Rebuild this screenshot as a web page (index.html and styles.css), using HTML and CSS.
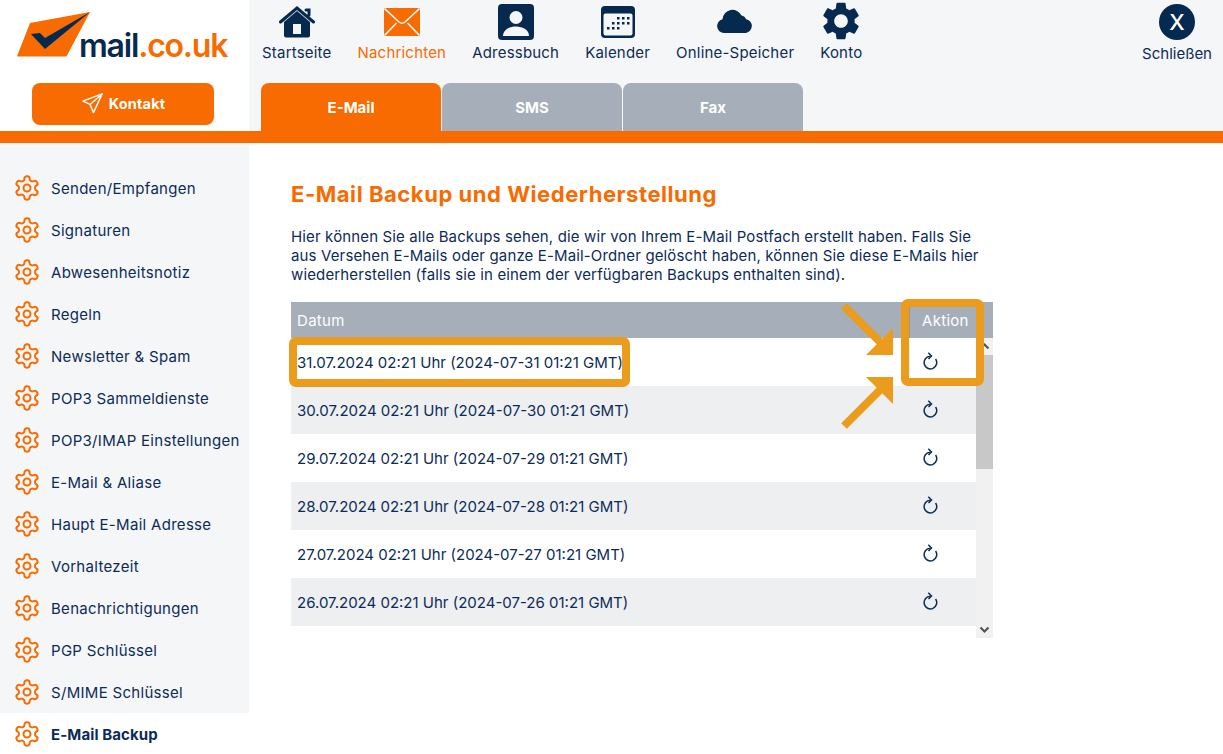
FILE: index.html
```html
<!DOCTYPE html>
<html lang="de">
<head>
<meta charset="utf-8">
<title>E-Mail Backup</title>
<link rel="stylesheet" href="styles.css">
</head>
<body>
<svg class="defs" width="0" height="0" aria-hidden="true">
  <symbol id="cog" viewBox="0 0 24 24"><path d="M12.22 2h-.44a2 2 0 0 0-2 2v.18a2 2 0 0 1-1 1.73l-.43.25a2 2 0 0 1-2 0l-.15-.08a2 2 0 0 0-2.73.73l-.22.38a2 2 0 0 0 .73 2.73l.15.1a2 2 0 0 1 1 1.72v.51a2 2 0 0 1-1 1.74l-.15.09a2 2 0 0 0-.73 2.73l.22.38a2 2 0 0 0 2.73.73l.15-.08a2 2 0 0 1 2 0l.43.25a2 2 0 0 1 1 1.73V20a2 2 0 0 0 2 2h.44a2 2 0 0 0 2-2v-.18a2 2 0 0 1 1-1.73l.43-.25a2 2 0 0 1 2 0l.15.08a2 2 0 0 0 2.73-.73l.22-.39a2 2 0 0 0-.73-2.73l-.15-.08a2 2 0 0 1-1-1.74v-.5a2 2 0 0 1 1-1.74l.15-.09a2 2 0 0 0 .73-2.73l-.22-.38a2 2 0 0 0-2.73-.73l-.15.08a2 2 0 0 1-2 0l-.43-.25a2 2 0 0 1-1-1.73V4a2 2 0 0 0-2-2z"/><circle cx="12" cy="12" r="3"/></symbol>
  <symbol id="redo" viewBox="0 0 16 18"><path d="M8.200 4.300A6.300 6.300 0 1 0 13.600 7"/><path d="M6.300 .8 9.500 4 6.500 7"/></symbol>
</svg>

<header class="top">
  <div class="brand">
    <div class="logo">
      <svg class="logo-mark" viewBox="0 0 76 48" width="76" height="48" aria-hidden="true">
        <path class="logo-env" d="M14 12 74 1 51 44.500Q50.500 45.500 49 45.500H2Q0.500 45.500 1.500 44Z"/>
        <path class="logo-check" d="M15 23 29 38 74 1 29 27 24 22Z"/>
      </svg>
      <span class="logo-text"><span class="logo-dark">mail</span>.co.uk</span>
    </div>
    <a class="contact">
      <svg viewBox="0 0 24 24" width="23" height="23" aria-hidden="true"><path d="M22 2 2 9.500l7.500 3.500L13 21.500Z"/><path d="M22 2 9.500 13"/></svg>
      Kontakt
    </a>
  </div>
  <div class="nav-area">
    <nav class="nav">
      <a class="nav-item">
        <svg viewBox="0 0 36 32" width="36" height="32" class="ico-home" aria-hidden="true"><path class="fill" d="M18 5 5 16v13.500a2 2 0 0 0 2 2h22a2 2 0 0 0 2-2V16Z"/><path class="hole" d="M14 18h8v10h-8z"/><path class="roof" d="M1.500 16 18 2l16.500 14M27 4h3v5"/></svg>
        <span>Startseite</span>
      </a>
      <a class="nav-item active">
        <svg viewBox="0 0 36 28" width="36" height="28" class="ico-mail" aria-hidden="true"><rect width="36" height="28"/><path d="M0.500 0.500 15 14q3 2.500 6 0L35.500 0.500M0.500 27.500 12.500 15M35.500 27.500 23.500 15"/></svg>
        <span>Nachrichten</span>
      </a>
      <a class="nav-item">
        <svg viewBox="0 0 36 36" width="36" height="36" class="ico-book" aria-hidden="true"><rect class="fill" width="36" height="36" rx="4"/><circle class="hole" cx="18" cy="13.500" r="6.500"/><path class="hole" d="M5 32c0-6 6-9.500 13-9.500S31 26 31 32Z"/></svg>
        <span>Adressbuch</span>
      </a>
      <a class="nav-item">
        <svg viewBox="0 0 34 32" width="34" height="32" class="ico-cal" aria-hidden="true"><rect class="fill" width="34" height="32" rx="4"/><rect class="hole" x="2.500" y="7.500" width="29" height="22" rx="2"/><g class="fill"><rect x="16" y="11" width="2.500" height="2.500"/><rect x="21" y="11" width="2.500" height="2.500"/><rect x="26" y="11" width="2.500" height="2.500"/><rect x="11" y="16" width="2.500" height="2.500"/><rect x="16" y="16" width="2.500" height="2.500"/><rect x="21" y="16" width="2.500" height="2.500"/><rect x="26" y="16" width="2.500" height="2.500"/><rect x="6" y="21" width="2.500" height="2.500"/><rect x="11" y="21" width="2.500" height="2.500"/><rect x="16" y="21" width="2.500" height="2.500"/></g></svg>
        <span>Kalender</span>
      </a>
      <a class="nav-item">
        <svg viewBox="0 0 36 24" width="36" height="24" class="ico-cloud" aria-hidden="true"><path class="fill" d="M7 24a7 7 0 0 1-1.500-13.800A10 10 0 0 1 24.500 6.500 5.500 5.500 0 0 1 29 10.200 7 7 0 0 1 29 24Z"/></svg>
        <span>Online-Speicher</span>
      </a>
      <a class="nav-item">
        <svg viewBox="2.500 2 19 20" width="36" height="38" class="ico-gear" aria-hidden="true"><path class="fill" d="M19.140 12.940c.04-.3.06-.61.06-.94 0-.32-.02-.64-.07-.94l2.030-1.580a.49.49 0 0 0 .12-.61l-1.920-3.320a.488.488 0 0 0-.59-.22l-2.390.96c-.5-.38-1.030-.7-1.620-.94l-.36-2.540a.484.484 0 0 0-.48-.41h-3.840c-.24 0-.43.17-.47.41l-.36 2.540c-.59.24-1.130.57-1.620.94l-2.390-.96c-.22-.08-.47 0-.59.22L2.740 8.870c-.12.21-.08.47.12.61l2.030 1.580c-.05.3-.09.63-.09.94s.02.64.07.94l-2.030 1.580a.49.49 0 0 0-.12.61l1.920 3.320c.12.22.37.29.59.22l2.390-.96c.5.38 1.030.7 1.620.94l.36 2.540c.05.24.24.41.48.41h3.840c.24 0 .44-.17.47-.41l.36-2.540c.59-.24 1.130-.56 1.620-.94l2.390.96c.22.08.47 0 .59-.22l1.920-3.320c.12-.22.07-.47-.12-.61l-2.010-1.580zM12 15.600c-1.980 0-3.600-1.620-3.600-3.600s1.620-3.600 3.600-3.600 3.600 1.620 3.600 3.600-1.620 3.600-3.600 3.600z"/></svg>
        <span>Konto</span>
      </a>
      <a class="nav-item close">
        <span class="close-x">X</span>
        <span>Schließen</span>
      </a>
    </nav>
    <div class="tabs">
      <a class="tab tab-on">E-Mail</a>
      <a class="tab">SMS</a>
      <a class="tab">Fax</a>
    </div>
  </div>
</header>
<div class="bar"></div>

<div class="content">
  <aside class="side">
    <a class="side-item"><svg class="cog"><use href="#cog"/></svg>Senden/Empfangen</a>
    <a class="side-item"><svg class="cog"><use href="#cog"/></svg>Signaturen</a>
    <a class="side-item"><svg class="cog"><use href="#cog"/></svg>Abwesenheitsnotiz</a>
    <a class="side-item"><svg class="cog"><use href="#cog"/></svg>Regeln</a>
    <a class="side-item"><svg class="cog"><use href="#cog"/></svg>Newsletter &amp; Spam</a>
    <a class="side-item"><svg class="cog"><use href="#cog"/></svg>POP3 Sammeldienste</a>
    <a class="side-item"><svg class="cog"><use href="#cog"/></svg>POP3/IMAP Einstellungen</a>
    <a class="side-item"><svg class="cog"><use href="#cog"/></svg>E-Mail &amp; Aliase</a>
    <a class="side-item"><svg class="cog"><use href="#cog"/></svg>Haupt E-Mail Adresse</a>
    <a class="side-item"><svg class="cog"><use href="#cog"/></svg>Vorhaltezeit</a>
    <a class="side-item"><svg class="cog"><use href="#cog"/></svg>Benachrichtigungen</a>
    <a class="side-item"><svg class="cog"><use href="#cog"/></svg>PGP Schlüssel</a>
    <a class="side-item"><svg class="cog"><use href="#cog"/></svg>S/MIME Schlüssel</a>
    <a class="side-item side-on"><svg class="cog"><use href="#cog"/></svg>E-Mail Backup</a>
  </aside>
  <main class="main">
    <h1 class="title">E-Mail Backup und Wiederherstellung</h1>
    <p class="intro">Hier können Sie alle Backups sehen, die wir von Ihrem E-Mail Postfach erstellt haben. Falls Sie aus Versehen E-Mails oder ganze E-Mail-Ordner gelöscht haben, können Sie diese E-Mails hier wiederherstellen (falls sie in einem der verfügbaren Backups enthalten sind).</p>
    <div class="table">
      <div class="thead"><span class="col-date">Datum</span><span class="col-act">Aktion</span></div>
      <div class="tbody">
        <div class="rows">
          <div class="row"><span class="col-date">31.07.2024 02:21 Uhr (2024-07-31 01:21 GMT)</span><span class="col-act"><svg class="redo"><use href="#redo"/></svg></span></div>
          <div class="row"><span class="col-date">30.07.2024 02:21 Uhr (2024-07-30 01:21 GMT)</span><span class="col-act"><svg class="redo"><use href="#redo"/></svg></span></div>
          <div class="row"><span class="col-date">29.07.2024 02:21 Uhr (2024-07-29 01:21 GMT)</span><span class="col-act"><svg class="redo"><use href="#redo"/></svg></span></div>
          <div class="row"><span class="col-date">28.07.2024 02:21 Uhr (2024-07-28 01:21 GMT)</span><span class="col-act"><svg class="redo"><use href="#redo"/></svg></span></div>
          <div class="row"><span class="col-date">27.07.2024 02:21 Uhr (2024-07-27 01:21 GMT)</span><span class="col-act"><svg class="redo"><use href="#redo"/></svg></span></div>
          <div class="row"><span class="col-date">26.07.2024 02:21 Uhr (2024-07-26 01:21 GMT)</span><span class="col-act"><svg class="redo"><use href="#redo"/></svg></span></div>
        </div>
        <div class="scroll">
          <svg class="scroll-btn" viewBox="0 0 17 17" aria-hidden="true"><path d="M4.500 10.500 8.500 6.500l4 4"/></svg>
          <div class="thumb"></div>
          <svg class="scroll-btn scroll-down" viewBox="0 0 17 17" aria-hidden="true"><path d="M4.500 6.500 8.500 10.500l4-4"/></svg>
        </div>
      </div>
    </div>
  </main>
</div>

<div class="mark mark-date"></div>
<div class="mark mark-act"></div>
<svg class="arrows" viewBox="0 0 60 130" width="60" height="130" aria-hidden="true">
  <path d="M5 7 46 48M5 127 46 86"/>
  <polygon points="54,29 54,56 27,56"/>
  <polygon points="54,78 54,105 27,78"/>
</svg>
</body>
</html>
```
FILE: styles.css
```css
* { box-sizing: border-box; }
html, body { margin: 0; height: 754px; overflow: hidden; }
body { position: relative; font-family: Inter, "Noto Sans", sans-serif; font-size: 15px; color: #0b2c57; background: #fff; }
.defs { position: absolute; }
a { color: inherit; text-decoration: none; }

.top { display: flex; height: 131px; }
.brand { width: 249px; flex: none; background: #fff; display: flex; flex-direction: column; }
.logo { height: 83px; width: 100%; display: flex; align-items: flex-start; padding: 11px 0 0 16px; position: relative; }
.logo-env { fill: #f76b00; }
.logo-check { fill: #06294f; }
.logo-text { position: absolute; left: 79px; top: 24px; font-size: 32px; line-height: 44px; font-weight: 600; letter-spacing: -1.200px; color: #f76b00; }
.logo-dark { color: #06294f; }
.contact { width: 182px; height: 42px; margin-left: 32px; padding-bottom: 2px; border-radius: 8px; background: #f76b00; color: #fff; font-weight: 700; font-size: 14.500px; letter-spacing: .2px; display: flex; align-items: center; justify-content: center; gap: 5px; }
.contact svg { fill: none; stroke: #fff; stroke-width: 1.500; stroke-linejoin: round; stroke-linecap: round; }

.nav-area { flex: 1; background: #f5f6f8; display: flex; flex-direction: column; }
.nav { height: 83px; display: flex; gap: 26px; padding: 0 11px 0 13px; letter-spacing: .2px; }
.nav-item { display: flex; flex-direction: column; align-items: center; justify-content: flex-end; height: 62px; line-height: 18px; white-space: nowrap; }
.nav-item svg { margin-bottom: 6px; }
.nav-item .ico-mail { margin-bottom: 8px; }
.nav-item .ico-book { margin-bottom: 4px; }
.nav-item .ico-gear { margin-bottom: 4px; }
.nav-item .ico-cloud { margin-bottom: 11px; }
.active { color: #f76b00; }
.fill { fill: #06294f; }
.hole { fill: #f5f6f8; }
.roof { fill: none; stroke: #06294f; stroke-width: 3; stroke-linecap: round; }
.ico-mail rect { fill: #f76b00; }
.ico-mail path { fill: none; stroke: #f5f6f8; stroke-width: 1.600; }
.close { margin-left: auto; height: 63px; letter-spacing: 0; }
.close-x { width: 36px; height: 36px; border-radius: 50%; background: #06294f; color: #fff; font-size: 22px; font-weight: 500; line-height: 36px; text-align: center; margin-bottom: 5px; }

.tabs { display: flex; gap: 1px; padding-left: 12px; height: 48px; }
.tab { width: 180px; height: 48px; border-radius: 8px 8px 0 0; background: #a5aeb9; color: #fff; font-weight: 700; font-size: 15px; line-height: 50px; text-align: center; }
.tab-on { background: #f76b00; }
.bar { height: 12px; background: #f76b00; }

.content { display: flex; height: 611px; }
.side { width: 249px; flex: none; background: #f5f6f8; padding-top: 24px; }
.side-item { display: flex; align-items: center; gap: 10px; height: 42px; padding-left: 13px; white-space: nowrap; letter-spacing: .3px; }
.side-on { background: #fff; font-weight: 700; letter-spacing: .1px; }
.cog { width: 28px; height: 28px; fill: none; stroke: #f76b00; stroke-width: 1.700; }

.main { padding: 36px 0 0 42px; width: 744px; }
.title { margin: 0 0 18px; font-size: 22px; line-height: 30px; font-weight: 700; letter-spacing: .55px; color: #f76b00; }
.intro { margin: 0 0 18px; line-height: 19px; width: 700px; letter-spacing: .14px; }

.table { width: 702px; }
.thead { display: flex; height: 36px; background: #a5aeb9; color: #fff; align-items: stretch; line-height: 37px; letter-spacing: .3px; }
.col-date { flex: 1; padding-left: 6px; }
.col-act { width: 67px; padding-left: 12px; flex: none; }
.thead .col-act { width: 84px; border-left: 1px solid #8f99a5; }
.tbody { display: flex; height: 300px; }
.rows { flex: 1; }
.row { display: flex; height: 48px; align-items: center; background: #fff; }
.row:nth-child(even) { background: #eeeff1; }
.redo { width: 16px; height: 18px; fill: none; stroke: #0b2c57; stroke-width: 1.500; display: block; margin: -3px 0 0 1px; }
.scroll { width: 17px; flex: none; background: #f1f1f1; display: flex; flex-direction: column; }
.scroll-btn { width: 17px; height: 17px; display: block; fill: none; stroke: #505050; stroke-width: 2; }
.scroll-down { margin-top: auto; }
.thumb { height: 114px; background: #c8c8c8; }

.mark { position: absolute; border: 8px solid #ec9c1c; border-radius: 7px; }
.mark-date { left: 289px; top: 337px; width: 341px; height: 50px; }
.mark-act { left: 901px; top: 299px; width: 83px; height: 87px; }
.arrows { position: absolute; left: 839px; top: 299px; }
.arrows path { fill: none; stroke: #ec9c1c; stroke-width: 8; }
.arrows polygon { fill: #ec9c1c; }
```
